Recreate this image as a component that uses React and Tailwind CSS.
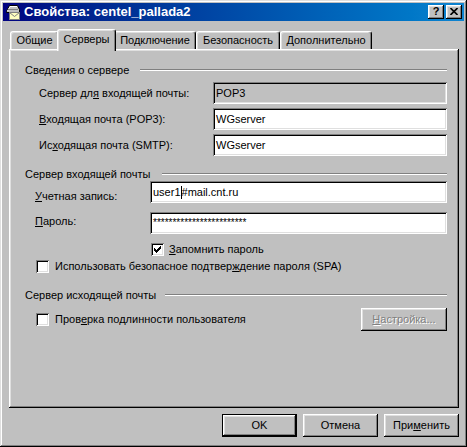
import React from 'react';

const raised = 'shadow-[inset_-1px_-1px_#000,inset_1px_1px_#fff,inset_-2px_-2px_#808080,inset_2px_2px_#dfdfdf]';
const sunken = 'shadow-[inset_1px_1px_#808080,inset_-1px_-1px_#fff,inset_2px_2px_#000,inset_-2px_-2px_#dfdfdf]';

function TitleIcon() {
  return (
    <svg width="16" height="16" viewBox="0 0 16 16" className="shrink-0">
      {/* mail server box */}
      <path d="M1.5 7.5 L4.5 1.5 H12.5 L14.5 5.5 V8.5 H1.5 Z" fill="#c0c0c0" stroke="#000" />
      <path d="M2.5 7 L5 2.5 H12" fill="none" stroke="#fff" />
      <path d="M3 5.5 H13" stroke="#808080" />
      {/* envelope */}
      <rect x="4.5" y="8.5" width="10" height="7" fill="#ffffc0" stroke="#808080" />
      <path d="M4.5 8.5 L9.5 12.5 L14.5 8.5" fill="none" stroke="#808080" />
    </svg>
  );
}

function CheckBox({ checked }) {
  return (
    <span className={`w-[13px] h-[13px] bg-white ${sunken} flex items-center justify-center shrink-0`}>
      {checked && (
        <svg width="7" height="7" viewBox="0 0 7 7" shapeRendering="crispEdges">
          <polygon points="0,2 2,4 6,0 7,0 7,2 2,7 0,5" fill="#000" />
        </svg>
      )}
    </span>
  );
}

function Heading({ children, width, className }) {
  return (
    <div className={`flex items-center h-[14px] ${className}`}>
      <span className={`${width} shrink-0`}>{children}</span>
      <div className="flex-1 h-[2px] border-t border-t-[#808080] border-b border-b-white" />
    </div>
  );
}

function Field({ children, disabled, className = '' }) {
  return (
    <div className={`flex-1 h-[22px] ${disabled ? 'bg-[#c0c0c0]' : 'bg-white'} ${sunken} flex items-center px-[3px] ${className}`}>
      {children}
    </div>
  );
}

export default function App() {
  return (
    <div className="w-[467px] h-[447px] bg-[#c0c0c0] p-[3px] flex flex-col shadow-[inset_-1px_-1px_#000,inset_1px_1px_#dfdfdf,inset_-2px_-2px_#808080,inset_2px_2px_#fff] font-['Liberation_Sans',Arial,sans-serif] text-[11px] leading-[13px] text-black select-none">
      {/* Title bar */}
      <div className="h-[18px] flex items-center bg-linear-to-r from-[#000080] to-[#1084d0] px-[2px]">
        <TitleIcon />
        <span className="ml-[3px] text-white font-bold text-[13px] leading-[16px]">Свойства: centel_pallada2</span>
        <div className="ml-auto flex gap-[2px]">
          <div className={`w-[16px] h-[14px] bg-[#c0c0c0] ${raised} flex items-center justify-center font-bold text-[11px] leading-[11px] pb-[1px]`}>?</div>
          <div className={`w-[16px] h-[14px] bg-[#c0c0c0] ${raised} flex items-center justify-center pb-[1px]`}>
            <svg width="8" height="7" viewBox="0 0 8 7">
              <path d="M0.5 0 L7.5 7 M7.5 0 L0.5 7" stroke="#000" strokeWidth="1.6" />
            </svg>
          </div>
        </div>
      </div>

      {/* Tabs */}
      <div className="flex items-end h-[20px] mt-[8px] ml-[7px]">
        <div className="w-[49px] h-[18px] border-t border-l border-white border-r border-r-black rounded-t-[3px] shadow-[inset_-1px_0_#808080,inset_1px_1px_#dfdfdf] flex items-center justify-center">Общие</div>
        <div className="relative z-10 w-[59px] h-[22px] -mx-[2px] -mb-[2px] bg-[#c0c0c0] border-t border-l border-white border-r border-r-black rounded-t-[3px] shadow-[inset_-1px_0_#808080,inset_1px_1px_#dfdfdf] flex justify-center pt-[3px]">Серверы</div>
        <div className="w-[82px] h-[18px] border-t border-l border-white border-r border-r-black rounded-t-[3px] shadow-[inset_-1px_0_#808080,inset_1px_1px_#dfdfdf] flex items-center justify-center">Подключение</div>
        <div className="w-[84px] h-[18px] border-t border-l border-white border-r border-r-black rounded-t-[3px] shadow-[inset_-1px_0_#808080,inset_1px_1px_#dfdfdf] flex items-center justify-center">Безопасность</div>
        <div className="w-[92px] h-[18px] border-t border-l border-white border-r border-r-black rounded-t-[3px] shadow-[inset_-1px_0_#808080,inset_1px_1px_#dfdfdf] flex items-center justify-center">Дополнительно</div>
      </div>

      {/* Panel */}
      <div className={`ml-[6px] w-[450px] h-[359px] ${raised} pl-[16px] pr-[12px] pt-[14px]`}>
        <Heading width="w-[115px]">Сведения о сервере</Heading>

        <div className="flex items-center h-[22px] mt-[5px]">
          <span className="w-[188px] pl-[14px] shrink-0">Сервер дл<u>я</u> входящей почты:</span>
          <Field disabled>POP3</Field>
        </div>
        <div className="flex items-center h-[22px] mt-[4px]">
          <span className="w-[188px] pl-[14px] shrink-0"><u>В</u>ходящая почта (POP3):</span>
          <Field>WGserver</Field>
        </div>
        <div className="flex items-center h-[22px] mt-[4px]">
          <span className="w-[188px] pl-[14px] shrink-0">Ис<u>х</u>одящая почта (SMTP):</span>
          <Field>WGserver</Field>
        </div>

        <Heading width="w-[137px]" className="mt-[11px]">Сервер входящей почты</Heading>

        <div className="flex items-start h-[22px]">
          <span className="w-[125px] pl-[10px] pt-[9px] shrink-0"><u>У</u>четная запись:</span>
          <Field>
            user1<span className="inline-block w-[1px] h-[13px] bg-black" />#mail.cnt.ru
          </Field>
        </div>
        <div className="flex items-start h-[22px] mt-[9px]">
          <span className="w-[125px] pl-[10px] pt-[3px] shrink-0"><u>П</u>ароль:</span>
          <Field className="text-[10px] items-start pt-[4px]">************************</Field>
        </div>

        <div className="flex items-center h-[13px] mt-[9px] pl-[126px] gap-[5px]">
          <CheckBox checked />
          <span><u>З</u>апомнить пароль</span>
        </div>
        <div className="flex items-center h-[13px] mt-[4px] pl-[11px] gap-[6px]">
          <CheckBox />
          <span>Использовать безопасное подтвер<u>ж</u>дение пароля (SPA)</span>
        </div>

        <Heading width="w-[140px]" className="mt-[15px]">Сервер исходящей почты</Heading>

        <div className="flex items-center h-[23px] mt-[6px] pl-[11px]">
          <CheckBox />
          <span className="ml-[6px]">Пров<u>е</u>рка подлинности пользователя</span>
          <div className={`ml-auto w-[86px] h-[23px] ${raised} flex items-center justify-center text-[#808080] [text-shadow:1px_1px_0_#fff]`}>
            <span><u>Н</u>астройка...</span>
          </div>
        </div>
      </div>

      {/* Dialog buttons */}
      <div className="flex justify-end gap-[6px] mt-[6px] pr-[5px]">
        <div className="w-[75px] h-[23px] border border-black">
          <div className={`w-full h-full ${raised} flex items-center justify-center`}>OK</div>
        </div>
        <div className={`w-[75px] h-[23px] ${raised} flex items-center justify-center`}>Отмена</div>
        <div className={`w-[75px] h-[23px] ${raised} flex items-center justify-center`}>При<u>м</u>енить</div>
      </div>
    </div>
  );
}
